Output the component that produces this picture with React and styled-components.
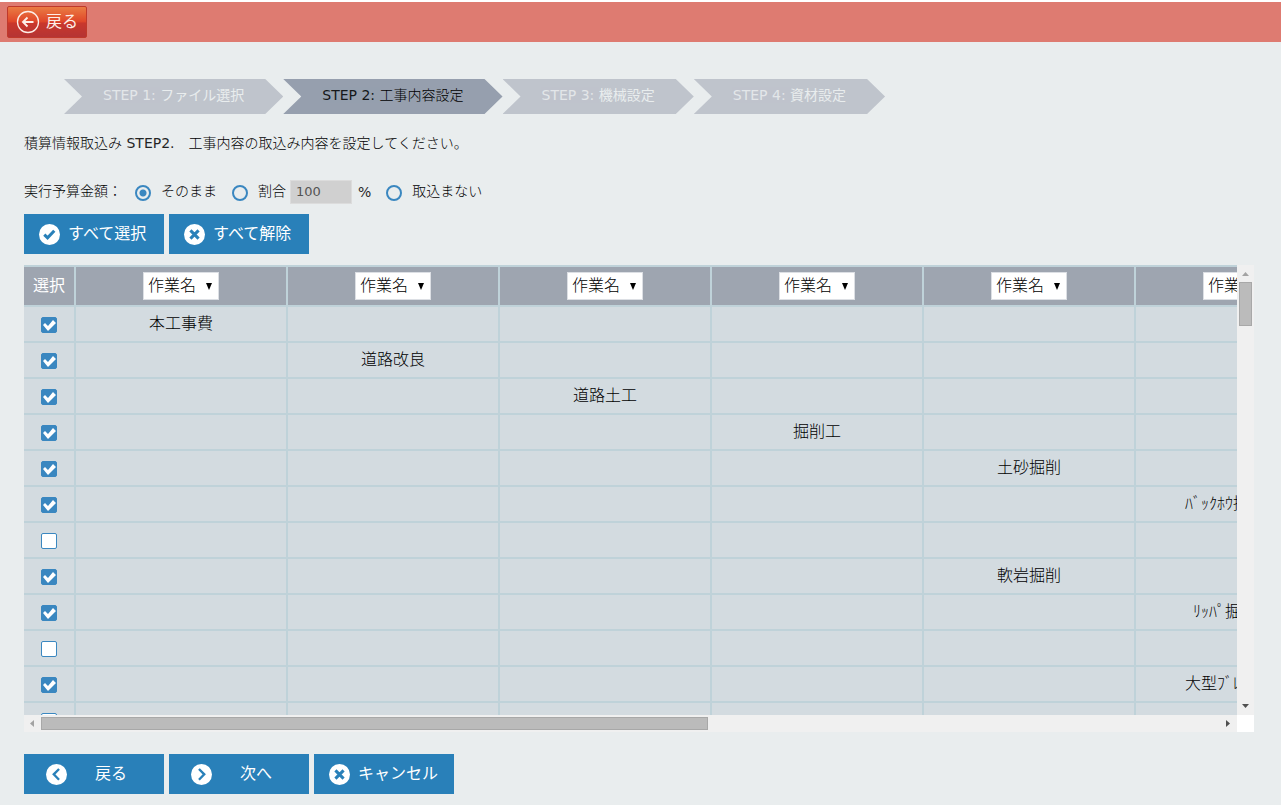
import React, { useState } from "react";
import styled, { createGlobalStyle } from "styled-components";

const STEPS = ["ファイル選択", "工事内容設定", "機械設定", "資材設定"];

const COLUMNS = [0, 1, 2, 3, 4, 5, 6, 7, 8, 9];

const ROWS = [
  { level: 0, name: "本工事費", checked: true },
  { level: 1, name: "道路改良", checked: true },
  { level: 2, name: "道路土工", checked: true },
  { level: 3, name: "掘削工", checked: true },
  { level: 4, name: "土砂掘削", checked: true },
  { level: 5, name: "ﾊﾞｯｸﾎｳ掘削積込", checked: true },
  { level: 6, name: "", checked: false },
  { level: 4, name: "軟岩掘削", checked: true },
  { level: 5, name: "ﾘｯﾊﾟ掘削積込", checked: true },
  { level: 6, name: "", checked: false },
  { level: 5, name: "大型ﾌﾞﾚｰｶｰ掘削", checked: true },
  { level: 6, name: "", checked: false },
];

export default function App() {
  const [rows, setRows] = useState(ROWS);
  const [budget, setBudget] = useState("asis");

  const setAll = (checked) => setRows(rows.map((r) => ({ ...r, checked })));
  const toggle = (index) =>
    setRows(
      rows.map((r, i) => (i === index ? { ...r, checked: !r.checked } : r))
    );

  return (
    <>
      <GlobalStyle />
      <Page>
        <TopBar>
          <TopButton type="button">
            <BackIcon />
            戻る
          </TopButton>
        </TopBar>
        <Content>
          <StepList>
            {STEPS.map((label, i) => (
              <Step key={label} $active={i === 1}>
                <Latin>{`STEP ${i + 1}: `}</Latin>
                {label}
              </Step>
            ))}
          </StepList>
          <Lead>
            積算情報取込み <Latin>STEP2.</Latin>
            {"　工事内容の取込み内容を設定してください。"}
          </Lead>
          <BudgetRow>
            <BudgetTitle>実行予算金額：</BudgetTitle>
            <RadioLabel>
              <Radio
                name="budget"
                checked={budget === "asis"}
                onChange={() => setBudget("asis")}
              />
              そのまま
            </RadioLabel>
            <RateGroup>
              <RadioLabel>
                <Radio
                  name="budget"
                  checked={budget === "rate"}
                  onChange={() => setBudget("rate")}
                />
                割合
              </RadioLabel>
              <RateInput
                aria-label="割合"
                defaultValue="100"
                disabled={budget !== "rate"}
              />
              <Latin>%</Latin>
            </RateGroup>
            <RadioLabel>
              <Radio
                name="budget"
                checked={budget === "none"}
                onChange={() => setBudget("none")}
              />
              取込まない
            </RadioLabel>
          </BudgetRow>
          <ButtonRow>
            <ActionButton type="button" onClick={() => setAll(true)}>
              <CircleIcon kind="check" />
              すべて選択
            </ActionButton>
            <ActionButton type="button" onClick={() => setAll(false)}>
              <CircleIcon kind="times" />
              すべて解除
            </ActionButton>
          </ButtonRow>
          <GridPanel>
            <Viewport>
              <Table>
                <colgroup>
                  <CheckCol />
                  {COLUMNS.map((c) => (
                    <NameCol key={c} />
                  ))}
                </colgroup>
                <thead>
                  <tr>
                    <HeadCell scope="col">選択</HeadCell>
                    {COLUMNS.map((c) => (
                      <HeadCell key={c} scope="col">
                        <SelectBox>
                          <Select aria-label={`列${c + 1}`}>
                            <option>作業名</option>
                            <option>数量</option>
                            <option>単位</option>
                          </Select>
                          <Caret viewBox="0 0 6 7">
                            <path d="M0 0h6L3 7z" />
                          </Caret>
                        </SelectBox>
                      </HeadCell>
                    ))}
                  </tr>
                </thead>
                <tbody>
                  {rows.map((row, i) => (
                    <tr key={i}>
                      <Cell>
                        <Checkbox
                          aria-label={`${i + 1}行目を選択`}
                          checked={row.checked}
                          onChange={() => toggle(i)}
                        />
                      </Cell>
                      {COLUMNS.map((c) => (
                        <Cell key={c}>{c === row.level ? row.name : ""}</Cell>
                      ))}
                    </tr>
                  ))}
                </tbody>
              </Table>
            </Viewport>
            <ScrollBar $vertical>
              <Arrow viewBox="0 0 17 17" $muted>
                <path d="M5 11h7L8.5 7z" />
              </Arrow>
              <Track $vertical>
                <Thumb $vertical $size="44px" />
              </Track>
              <Arrow viewBox="0 0 17 17">
                <path d="M5 6h7l-3.5 4z" />
              </Arrow>
            </ScrollBar>
            <ScrollBar>
              <Arrow viewBox="0 0 17 17" $muted>
                <path d="M10 5v7L6 8.5z" />
              </Arrow>
              <Track>
                <Thumb $size="56.6%" />
              </Track>
              <Arrow viewBox="0 0 17 17">
                <path d="M6 5v7l4-3.5z" />
              </Arrow>
            </ScrollBar>
            <Corner />
          </GridPanel>
          <ButtonRow>
            <ActionButton type="button" $wide>
              <CircleIcon kind="left" />
              戻る
            </ActionButton>
            <ActionButton type="button" $wide>
              <CircleIcon kind="right" />
              次へ
            </ActionButton>
            <ActionButton type="button">
              <CircleIcon kind="times" />
              キャンセル
            </ActionButton>
          </ButtonRow>
        </Content>
      </Page>
    </>
  );
}

const ICON_PATHS = {
  check: { d: "M5.2 10.4l3.2 3.2 6.6-7", width: 3 },
  times: { d: "M6.3 6.3l8 8M14.3 6.3l-8 8", width: 3 },
  left: { d: "M12.8 4.9l-5.2 5.2 5.2 5.3", width: 2.3 },
  right: { d: "M7.8 4.9l5.2 5.2-5.2 5.3", width: 2.3 },
};

function CircleIcon({ kind }) {
  const { d, width } = ICON_PATHS[kind];
  return (
    <svg width="21" height="21" viewBox="0 0 20.6 20.6" aria-hidden="true">
      <circle cx="10.3" cy="10.3" r="10.3" fill="#fff" />
      <path d={d} fill="none" stroke="#2980b9" strokeWidth={width} />
    </svg>
  );
}

function BackIcon() {
  return (
    <svg width="24" height="24" viewBox="0 0 24 24" aria-hidden="true">
      <g fill="none" stroke="#fdeee8">
        <circle cx="12" cy="12" r="10.5" strokeWidth="1.3" />
        <path d="M17.5 12H7.5M11.5 7.5L7 12l4.5 4.5" strokeWidth="1.9" />
      </g>
    </svg>
  );
}

const GlobalStyle = createGlobalStyle`
  *, *::before, *::after {
    box-sizing: border-box;
  }
  body {
    margin: 0;
    background: #e9edee;
    color: #000;
    font-family: "DejaVu Sans", "Noto Sans CJK JP", sans-serif;
    font-size: 14px;
    font-weight: 300;
  }
  button, input, select {
    font-family: inherit;
    font-weight: inherit;
  }
`;

const Page = styled.div`
  display: flex;
  flex-direction: column;
  height: 100vh;
  min-height: 600px;
`;

/* the light weight is only wanted for the Japanese glyphs */
const Latin = styled.span`
  font-weight: 400;
  opacity: 0.85;
`;

const TopBar = styled.header`
  display: flex;
  align-items: center;
  flex: none;
  height: 42px;
  padding: 0 7px;
  border-top: 2px solid #fff;
  background: #de7b71;
`;

const TopButton = styled.button`
  display: flex;
  align-items: center;
  gap: 6px;
  height: 32px;
  padding: 0 8px;
  border: 1px solid #c0392b;
  border-radius: 2px;
  background: linear-gradient(#ea7c43, #e0472a 48%, #c9372c 54%, #b53434);
  color: #fdeee8;
  font-size: 16px;
  font-weight: 400;
  line-height: 24px;
  cursor: pointer;
`;

const Content = styled.main`
  display: flex;
  flex-direction: column;
  flex: 1;
  min-height: 0;
  padding: 37px 27px 11px 24px;
`;

const StepList = styled.ol`
  display: flex;
  flex: none;
  margin: 0;
  padding: 0 0 0 40px;
  list-style: none;
`;

const Step = styled.li`
  height: 35px;
  padding: 0 39px;
  background: ${(props) => (props.$active ? "#969fae" : "#bfc4cc")};
  color: ${(props) => (props.$active ? "#000" : "#e9edee")};
  font-weight: ${(props) => (props.$active ? 300 : 400)};
  line-height: 33px;
  white-space: nowrap;
  clip-path: polygon(
    0 0,
    calc(100% - 18px) 0,
    100% 50%,
    calc(100% - 18px) 100%,
    0 100%,
    18px 50%
  );
`;

const Lead = styled.p`
  margin: 17px 0 0;
  line-height: 24px;
`;

const BudgetRow = styled.div`
  display: flex;
  align-items: center;
  flex: none;
  gap: 15px;
  height: 24px;
  margin: 25px 0 10px;
  line-height: 20px;
`;

const BudgetTitle = styled.span`
  width: 96px;
  padding-bottom: 2px;
  white-space: nowrap;
`;

const RadioLabel = styled.label`
  display: flex;
  align-items: center;
  gap: 10px;
  padding-bottom: 2px;
  white-space: nowrap;
`;

const Radio = styled.input.attrs({ type: "radio" })`
  appearance: none;
  width: 16px;
  height: 16px;
  margin: 3px 0 0;
  border: 2px solid #3a87c0;
  border-radius: 50%;
  &:checked {
    background: radial-gradient(circle, #3a87c0 3px, transparent 4px);
  }
`;

const RateGroup = styled.div`
  display: flex;
  align-items: center;
  gap: 4px;
`;

const RateInput = styled.input`
  width: 62px;
  height: 24px;
  margin-right: 2px;
  padding: 0 5px 2px;
  border: 1px solid #dcdcdc;
  background: #fff;
  color: #545454;
  font-size: 13px;
  font-weight: 400;
  &:disabled {
    background: #d0d0d0;
  }
`;

const ButtonRow = styled.div`
  display: flex;
  flex: none;
  gap: 5px;
`;

const ActionButton = styled.button`
  display: flex;
  align-items: center;
  gap: ${(props) => (props.$wide ? "28px" : "8px")};
  width: 140px;
  height: 40px;
  padding: 0 0 0 ${(props) => (props.$wide ? "22px" : "15px")};
  border: 0;
  background: #2980b9;
  color: #fff;
  font-size: 16px;
  font-weight: 400;
  line-height: 24px;
  white-space: nowrap;
  cursor: pointer;
`;

const GridPanel = styled.section`
  display: grid;
  grid-template: minmax(0, 1fr) 17px / minmax(0, 1fr) 17px;
  flex: 1;
  min-height: 0;
  margin: 11px 0 22px;
`;

const Viewport = styled.div`
  overflow: auto;
  scrollbar-width: none;
`;

const Table = styled.table`
  width: 2170px;
  border-spacing: 0;
  table-layout: fixed;
  font-size: 16px;
`;

const CheckCol = styled.col`
  width: 50px;
`;

const NameCol = styled.col`
  width: 212px;
`;

const HeadCell = styled.th`
  height: 40px;
  padding: 0;
  border-top: 2px solid #bfd2d9;
  background: #9ea5b0;
  color: #fff;
  font-weight: 400;
  line-height: 24px;
  & + & {
    border-left: 2px solid #bfd2d9;
  }
`;

const Cell = styled.td`
  height: 36px;
  padding: 0;
  border-top: 2px solid #bfd2d9;
  background: #d3dbe0;
  line-height: 24px;
  text-align: center;
  white-space: nowrap;
  & + & {
    border-left: 2px solid #bfd2d9;
  }
`;

const SelectBox = styled.div`
  display: inline-grid;
  align-items: center;
  vertical-align: middle;
`;

const Select = styled.select`
  grid-area: 1 / 1;
  appearance: none;
  width: 76px;
  height: 28px;
  padding: 0 4px 2px;
  border: 1px solid #dcdfe4;
  border-radius: 0;
  background: #fff;
  color: #000;
  font-size: 16px;
  font-weight: 300;
`;

const Caret = styled.svg`
  grid-area: 1 / 1;
  justify-self: end;
  width: 6px;
  height: 7px;
  margin-right: 7px;
  pointer-events: none;
`;

const Checkbox = styled.input.attrs({ type: "checkbox" })`
  appearance: none;
  display: block;
  width: 16px;
  height: 16px;
  margin: 2px auto 0;
  border: 1px solid #3a87c0;
  border-radius: 2px;
  background: #fff;
  &:checked {
    background: #3a87c0;
  }
  &:checked::before {
    content: "";
    display: block;
    width: 14px;
    height: 14px;
    background: #fff;
    clip-path: polygon(1px 7px, 3px 5px, 6px 8px, 11px 2px, 14px 5px, 6px 13px);
  }
`;

const ScrollBar = styled.div`
  display: flex;
  flex-direction: ${(props) => (props.$vertical ? "column" : "row")};
  background: #f0f0f0;
`;

const Track = styled.div`
  flex: 1;
  padding: ${(props) => (props.$vertical ? "0 2px" : "2px 0")};
`;

const Thumb = styled.div`
  width: ${(props) => (props.$vertical ? "100%" : props.$size)};
  height: ${(props) => (props.$vertical ? props.$size : "100%")};
  border: 1px solid #a8a8a8;
  background: #bbb;
`;

const Arrow = styled.svg`
  flex: none;
  width: 17px;
  height: 17px;
  fill: ${(props) => (props.$muted ? "#a3a3a3" : "#505050")};
`;

const Corner = styled.div`
  background: #fff;
`;
